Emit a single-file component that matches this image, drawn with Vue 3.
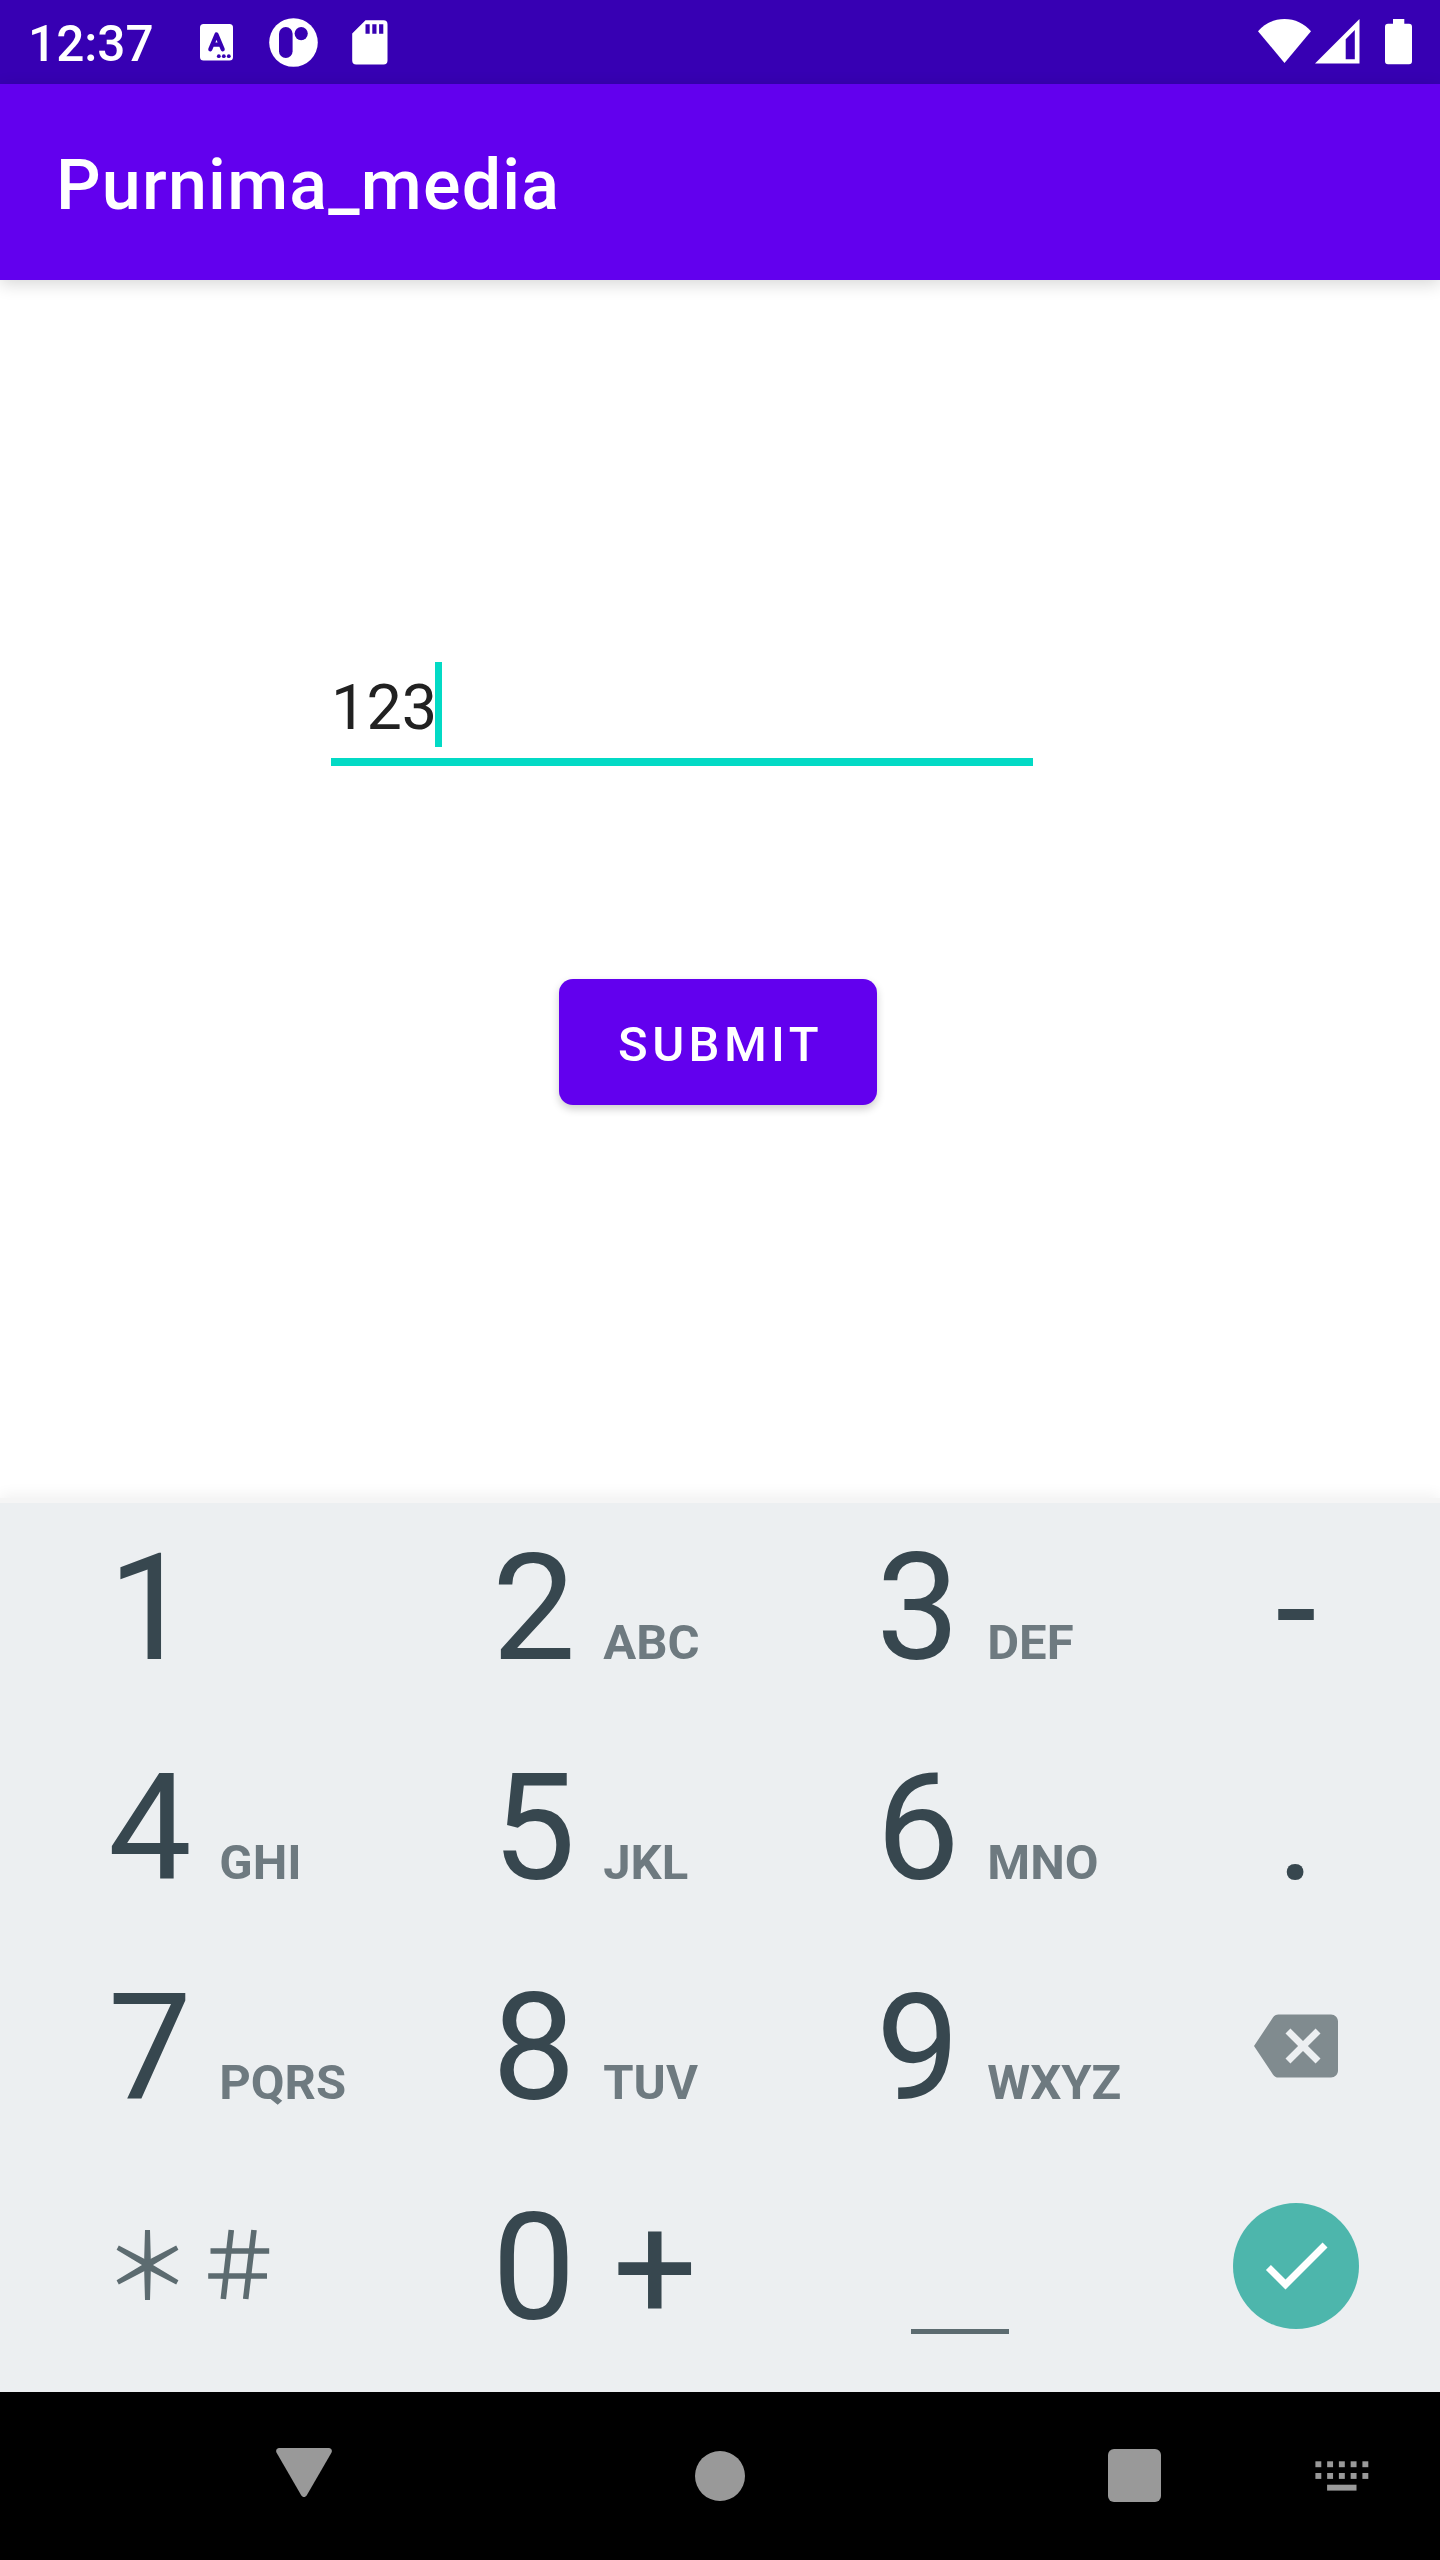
<script setup>
const rows = [
  [
    { digit: '1' },
    { digit: '2', hint: 'ABC' },
    { digit: '3', hint: 'DEF' },
    { symbol: '-' },
  ],
  [
    { digit: '4', hint: 'GHI' },
    { digit: '5', hint: 'JKL' },
    { digit: '6', hint: 'MNO' },
    { symbol: '.' },
  ],
  [
    { digit: '7', hint: 'PQRS' },
    { digit: '8', hint: 'TUV' },
    { digit: '9', hint: 'WXYZ' },
    { action: 'delete' },
  ],
  [
    { action: 'symbols' },
    { digit: '0', plus: '+' },
    { action: 'space' },
    { action: 'done' },
  ],
]
const keys = rows.flat()
const dots = [0, 1, 2, 3, 4]
</script>

<template>
  <div class="screen">
    <header class="status">
      <span class="clock">12:37</span>
      <svg class="ico-a" width="33" height="37" viewBox="0 0 33 37">
        <rect width="33" height="36.5" rx="3.5" fill="#fff" />
        <path d="M10.3 25.3 16.5 10.5 22.7 25.3M12.5 20.6h8" fill="none" stroke="#3700b3" stroke-width="4.2" stroke-linecap="round" stroke-linejoin="round" />
        <g fill="#3700b3">
          <circle cx="18.8" cy="32.2" r="1.9" /><circle cx="23.8" cy="32.2" r="1.9" /><circle cx="28.8" cy="32.2" r="1.9" />
        </g>
      </svg>
      <svg class="ico-p" width="49" height="49" viewBox="0 0 49 49">
        <circle cx="24.5" cy="24.5" r="24.3" fill="#fff" />
        <rect x="10" y="9" width="13.6" height="31" rx="6.8" fill="#3700b3" />
        <circle cx="32.2" cy="15.6" r="6.6" fill="#3700b3" />
      </svg>
      <svg class="ico-sd" width="36" height="45" viewBox="0 0 36 45">
        <path fill="#fff" fill-rule="evenodd" d="M13.5.3H31.5a4 4 0 0 1 4 4V40.5a4 4 0 0 1-4 4H4.2a4 4 0 0 1-4-4V13.6ZM13.5 4.3v9.400h4.200V4.300ZM20.300 4.300v9.400h4.200V4.300ZM27.100 4.300v9.400h4.200V4.300Z" />
      </svg>
      <span class="grow"></span>
      <svg class="ico-wifi" width="53" height="44" viewBox="0 0 53 44">
        <path fill="#fff" d="M26.500 44 0 12.200C7 4.500 16 0 26.500 0S46 4.500 53 12.200Z" />
      </svg>
      <svg class="ico-sig" width="45" height="45" viewBox="0 0 45 45">
        <path fill="#fff" fill-rule="evenodd" d="M0 44.500 44.500 0V44.500ZM30.700 20.200V40.300H39.800V11Z" />
      </svg>
      <svg class="ico-bat" width="27" height="46" viewBox="0 0 27 46">
        <path fill="#fff" d="M8 0h11.300v4.700H24a3 3 0 0 1 3 3V42.300a3 3 0 0 1-3 3H3a3 3 0 0 1-3-3V7.700a3 3 0 0 1 3-3H8Z" />
      </svg>
    </header>

    <div class="appbar"><h1>Purnima_media</h1></div>

    <main class="content">
      <div class="field">
        <span class="value">123</span><span class="caret"></span>
      </div>
      <button class="submit">SUBMIT</button>
    </main>

    <section class="keyboard">
      <div class="keys">
        <div v-for="(k, i) in keys" :key="i" class="key" :class="{ side: i % 4 === 3 }">
          <template v-if="k.digit">
            <span class="digit">{{ k.digit }}</span>
            <span v-if="k.hint" class="hint">{{ k.hint }}</span>
            <span v-if="k.plus" class="digit plus">{{ k.plus }}</span>
          </template>
          <span v-else-if="k.symbol" class="digit">{{ k.symbol }}</span>
          <svg v-else-if="k.action === 'delete'" class="del" width="84" height="84" viewBox="0 0 24 24">
            <path fill="#808b8f" d="M22 3H7c-.69 0-1.23.35-1.59.88L0 12l5.41 8.11c.36.53.9.89 1.59.89h15c1.1 0 2-.9 2-2V5c0-1.1-.9-2-2-2zm-3 12.59L17.59 17 14 13.41 10.41 17 9 15.59 12.59 12 9 8.41 10.41 7 14 10.59 17.59 7 19 8.41 15.41 12 19 15.59z" />
          </svg>
          <svg v-else-if="k.action === 'symbols'" class="sym" width="156" height="72" viewBox="0 0 156 72">
            <g fill="#5c6b70">
              <path d="M29 1h5l.8 28.500-1 6.500 1 6.500L34 71h-5l-.8-28.500 1-6.500-1-6.500Z" />
              <path d="M2.800 16.500.6 20.700 26 36 .6 51.300l2.200 4.200L31.500 40.500l28.700 15 2.200-4.200L37 36 62.400 20.700l-2.200-4.200L31.500 31.500Z" />
            </g>
            <path d="M115.300 1 107.300 70M138 1 129.700 70M94.500 22H153.200M92.200 47H151" fill="none" stroke="#5c6b70" stroke-width="5.600" />
          </svg>
          <span v-else-if="k.action === 'space'" class="space"></span>
          <span v-else class="done">
            <svg width="84" height="84" viewBox="0 0 24 24"><path fill="#fff" d="M9 16.17 4.83 12l-1.42 1.41L9 19 21 7l-1.41-1.41z" /></svg>
          </span>
        </div>
      </div>
    </section>

    <nav class="navbar">
      <svg class="back" width="56" height="50" viewBox="0 0 56 50">
        <path fill="#999" d="M3.200 0H52.800c2.600 0 3.800 2.600 2.600 4.800L30.800 47.200c-1.400 2.400-4.200 2.400-5.600 0L.6 4.800C-.6 2.600.6 0 3.200 0Z" />
      </svg>
      <span class="home"></span>
      <span class="recent"></span>
      <svg class="ime" width="54" height="30" viewBox="0 0 54 30" fill="#999">
        <rect v-for="d in dots" :key="'a' + d" :x="0.4 + d * 11.75" y="0.3" width="5.9" height="5.9" />
        <rect v-for="d in dots" :key="'b' + d" :x="0.4 + d * 11.75" y="12" width="5.9" height="5.9" />
        <rect x="12.1" y="23.7" width="29.4" height="5.9" />
      </svg>
    </nav>
  </div>
</template>

<style>
body { margin: 0; }
</style>

<style scoped>
.screen {
  width: 1440px;
  height: 2560px;
  display: flex;
  flex-direction: column;
  overflow: hidden;
  background: #fff;
  font-family: Roboto, "Liberation Sans", sans-serif;
}
.status {
  flex: none;
  height: 84px;
  display: flex;
  align-items: flex-start;
  background: #3700b3;
}
.clock {
  width: 170px;
  box-sizing: border-box;
  padding-left: 28px;
  margin-top: 15px;
  font-size: 49.5px;
  line-height: 58px;
  font-weight: 500;
  color: #fff;
}
.grow { flex: 1; }
.ico-a { margin: 24px 0 0 30px; }
.ico-p { margin: 18px 0 0 36px; }
.ico-sd { margin: 20px 0 0 34px; }
.ico-wifi { margin-top: 19px; }
.ico-sig { margin: 19px 0 0 4px; }
.ico-bat { margin: 19px 28px 0 25px; }
.appbar {
  flex: none;
  height: 196px;
  display: flex;
  align-items: center;
  padding-left: 56px;
  background: #6200ee;
  box-shadow: 0 4px 16px rgba(0, 0, 0, 0.16);
}
h1 {
  margin: 6px 0 0;
  font-size: 70px;
  line-height: 82px;
  font-weight: 500;
  letter-spacing: 1.2px;
  color: #fff;
}
.content {
  flex: none;
  height: 1218px;
  display: flex;
  flex-direction: column;
  align-items: flex-start;
}
.field {
  width: 702px;
  height: 104px;
  box-sizing: border-box;
  margin: 382px 0 0 331px;
  display: flex;
  align-items: flex-start;
  border-bottom: 8px solid #03dac5;
}
.value {
  margin-top: 9px;
  font-size: 63px;
  line-height: 74px;
  color: #212121;
}
.caret {
  width: 7px;
  height: 85px;
  margin-left: -2px;
  background: #03dac5;
}
.submit {
  width: 318px;
  height: 126px;
  margin: 213px 0 0 559px;
  padding: 4px 0 0 5px;
  border: 0;
  border-radius: 14px;
  background: #6200ee;
  box-shadow: 0 4px 8px rgba(0, 0, 0, 0.2);
  font-family: inherit;
  font-size: 49px;
  line-height: 57px;
  font-weight: 500;
  letter-spacing: 4.375px;
  color: #fff;
}
.keyboard {
  flex: none;
  height: 894px;
  box-sizing: border-box;
  border-top: 5px solid #f5f5f5;
  background: #eceff1;
  background-clip: padding-box;
  box-shadow: 0 -3px 14px rgba(0, 0, 0, 0.06);
}
.keys {
  margin-top: -7px;
  display: grid;
  grid-template-columns: 384px 384px 384px 288px;
  grid-auto-rows: 220px;
}
.key {
  box-sizing: border-box;
  padding: 24px 0 0 108px;
  display: flex;
  align-items: baseline;
}
.side {
  padding-left: 0;
  justify-content: center;
}
.digit {
  font-size: 149px;
  line-height: 176px;
  color: #37474f;
}
.hint {
  margin-left: 27.5px;
  font-size: 49px;
  line-height: 57px;
  font-weight: 700;
  color: #6e7a80;
}
.plus { margin-left: 37px; }
.del, .done { align-self: flex-start; }
.del { margin-top: 44px; }
.sym { align-self: flex-start; margin: 49px 0 0 8px; }
.space {
  align-self: flex-start;
  width: 98px;
  height: 5px;
  margin: 149px 0 0 35px;
  background: #5c6b70;
}
.done {
  width: 126px;
  height: 126px;
  margin-top: 23px;
  border-radius: 50%;
  display: flex;
  justify-content: center;
  background: #4db6ac;
}
.done svg { margin-top: 20px; }
.navbar {
  flex: none;
  height: 168px;
  display: flex;
  align-items: flex-start;
  background: #000;
}
.back { margin: 56px 0 0 276px; }
.home {
  width: 50px;
  height: 50px;
  margin: 59px 0 0 363px;
  border-radius: 50%;
  background: #999;
}
.recent {
  width: 53px;
  height: 53px;
  margin: 57px 0 0 363px;
  border-radius: 6px;
  background: #999;
}
.ime { margin: 69px 0 0 154px; }
</style>
